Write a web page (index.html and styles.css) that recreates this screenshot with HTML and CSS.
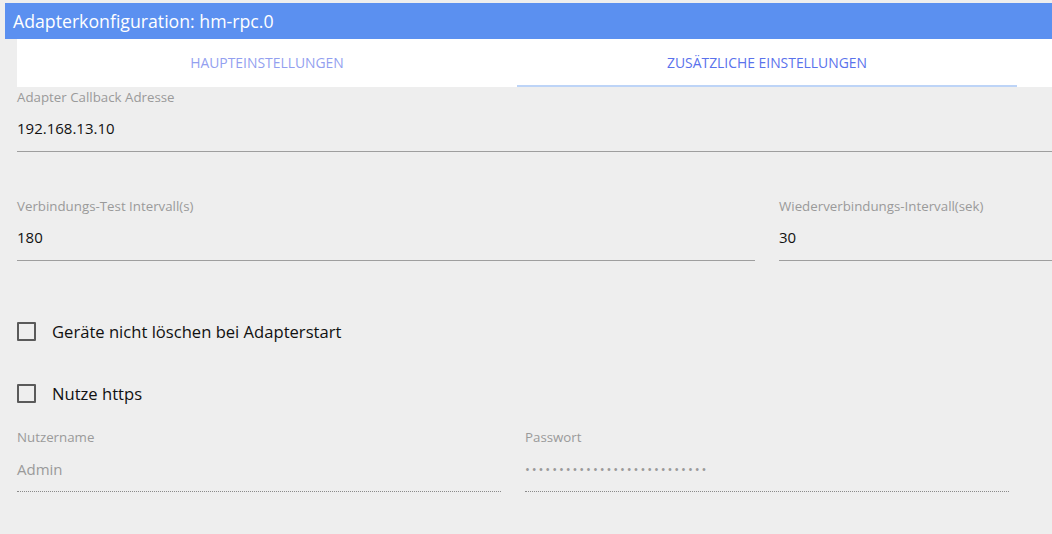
FILE: index.html
```html
<!DOCTYPE html>
<html lang="de">
<head>
<meta charset="utf-8">
<title>Adapterkonfiguration: hm-rpc.0</title>
<link rel="stylesheet" href="styles.css">
</head>
<body>
<div class="page">
  <div class="titlebar">Adapterkonfiguration: hm-rpc.0</div>
  <div class="content">
    <div class="tabs">
      <div class="tab">HAUPTEINSTELLUNGEN</div>
      <div class="tab active">ZUSÄTZLICHE EINSTELLUNGEN</div>
    </div>
    <div class="field full">
      <div class="label">Adapter Callback Adresse</div>
      <div class="value">192.168.13.10</div>
    </div>
    <div class="row two">
      <div class="field">
        <div class="label">Verbindungs-Test Intervall(s)</div>
        <div class="value">180</div>
      </div>
      <div class="field">
        <div class="label">Wiederverbindungs-Intervall(sek)</div>
        <div class="value">30</div>
      </div>
    </div>
    <label class="check first"><span class="box"></span><span class="check-text">Geräte nicht löschen bei Adapterstart</span></label>
    <label class="check"><span class="box"></span><span class="check-text">Nutze https</span></label>
    <div class="row creds">
      <div class="field disabled">
        <div class="label">Nutzername</div>
        <div class="value">Admin</div>
      </div>
      <div class="field disabled">
        <div class="label">Passwort</div>
        <div class="value dots">•••••••••••••••••••••••••••</div>
      </div>
    </div>
  </div>
</div>
</body>
</html>
```

FILE: styles.css
```css
* { box-sizing: border-box; }
html, body { margin: 0; padding: 0; }
body {
  background: #eeeeee;
  font-family: "Open Sans", "Noto Sans", sans-serif;
  width: 1052px;
  height: 534px;
  overflow: hidden;
}
.page { padding: 3px 0 0 5px; }
.titlebar {
  background: #5b90f0;
  color: #ffffff;
  height: 36px;
  font-size: 17.7px;
  line-height: 36px;
  padding-left: 8px;
  white-space: nowrap;
}
.content { padding-left: 12px; }
.tabs {
  display: flex;
  background: #ffffff;
  height: 48px;
}
.tab {
  width: 500px;
  text-align: center;
  font-size: 13.9px;
  line-height: 48px;
  color: #939ff0;
  position: relative;
}
.tab.active { color: #5a72ec; }
.tab.active::after {
  content: "";
  position: absolute;
  left: 0; right: 0; bottom: 0;
  height: 2px;
  background: #bdd4f7;
}
.field { border-bottom: 1px solid #9e9e9e; }
.label {
  font-size: 13.3px;
  color: #9a9a9a;
  line-height: 18px;
  height: 18px;
  white-space: nowrap;
}
.value {
  font-size: 15px;
  color: #111111;
  line-height: 20px;
  padding: 12px 0 13px;
  white-space: nowrap;
}
.full .label { margin-top: 1px; }
.row { display: flex; }
.row.two { margin-top: 45px; gap: 24px; }
.row.two .field:first-child { width: 738px; }
.row.two .field:last-child { flex: 1; }
.check {
  display: flex;
  align-items: center;
  height: 20px;
  margin-top: 42px;
  cursor: pointer;
}
.check.first { margin-top: 60px; }
.box {
  width: 19px;
  height: 19px;
  border: 2px solid #5a5a5a;
  border-radius: 1px;
  flex: none;
}
.check-text {
  margin-left: 16px;
  font-size: 16.6px;
  color: #111111;
}
.row.creds { margin-top: 25px; gap: 24px; }
.row.creds .field { width: 484px; border-bottom: 1px dotted #8a8a8a; }
.creds .value { padding: 13px 0 12px; }
.disabled .value { color: #9a9a9a; }
.dots { font-size: 13px; letter-spacing: 1.9px; color: #8c8c8c; }
```
